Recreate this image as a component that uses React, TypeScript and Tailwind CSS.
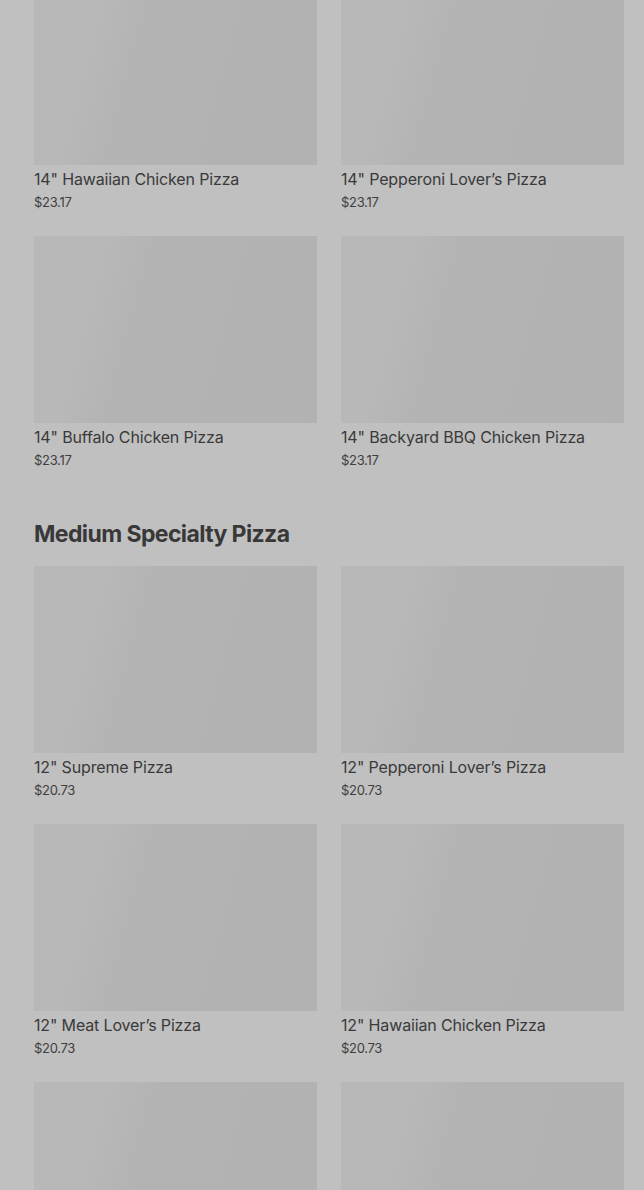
import React from "react";

interface Item {
  name: string;
  price: string;
}

const large: Item[] = [
  { name: '14" Hawaiian Chicken Pizza', price: "$23.17" },
  { name: '14" Pepperoni Lover\u2019s Pizza', price: "$23.17" },
  { name: '14" Buffalo Chicken Pizza', price: "$23.17" },
  { name: '14" Backyard BBQ Chicken Pizza', price: "$23.17" },
];

const medium: Item[] = [
  { name: '12" Supreme Pizza', price: "$20.73" },
  { name: '12" Pepperoni Lover\u2019s Pizza', price: "$20.73" },
  { name: '12" Meat Lover\u2019s Pizza', price: "$20.73" },
  { name: '12" Hawaiian Chicken Pizza', price: "$20.73" },
  { name: "", price: "" },
  { name: "", price: "" },
];

function Card({ item }: { item: Item }) {
  return (
    <div className="flex flex-col">
      <div className="h-[187px] w-full bg-[linear-gradient(105deg,#b8b8b8_0%,#b8b8b8_22%,#b3b3b3_38%,#b2b2b2_100%)]" />
      {item.name && (
        <>
          <div className="mt-[3px] text-[16px] leading-[22px] text-[#3a3a3a] tracking-[-0.15px]">{item.name}</div>
          <div className="mt-[2px] text-[13px] leading-[20px] text-[#3f3f3f] tracking-[-0.3px]">{item.price}</div>
        </>
      )}
    </div>
  );
}

export default function App() {
  return (
    <div className="h-[1190px] overflow-hidden bg-[#c0c0c0] font-['Inter','Liberation_Sans',sans-serif]">
      <div className="pl-[34px] pr-[20px] -mt-[22px]">
        <div className="grid grid-cols-2 gap-x-[24px] gap-y-[24px]">
          {large.map((it, i) => (
            <Card key={i} item={it} />
          ))}
        </div>

        <h2 className="mt-[49px] mb-[17px] text-[23px] leading-[30px] font-bold text-[#383838] tracking-[-0.6px]">
          Medium Specialty Pizza
        </h2>

        <div className="grid grid-cols-2 gap-x-[24px] gap-y-[24px]">
          {medium.map((it, i) => (
            <Card key={i} item={it} />
          ))}
        </div>
      </div>
    </div>
  );
}
